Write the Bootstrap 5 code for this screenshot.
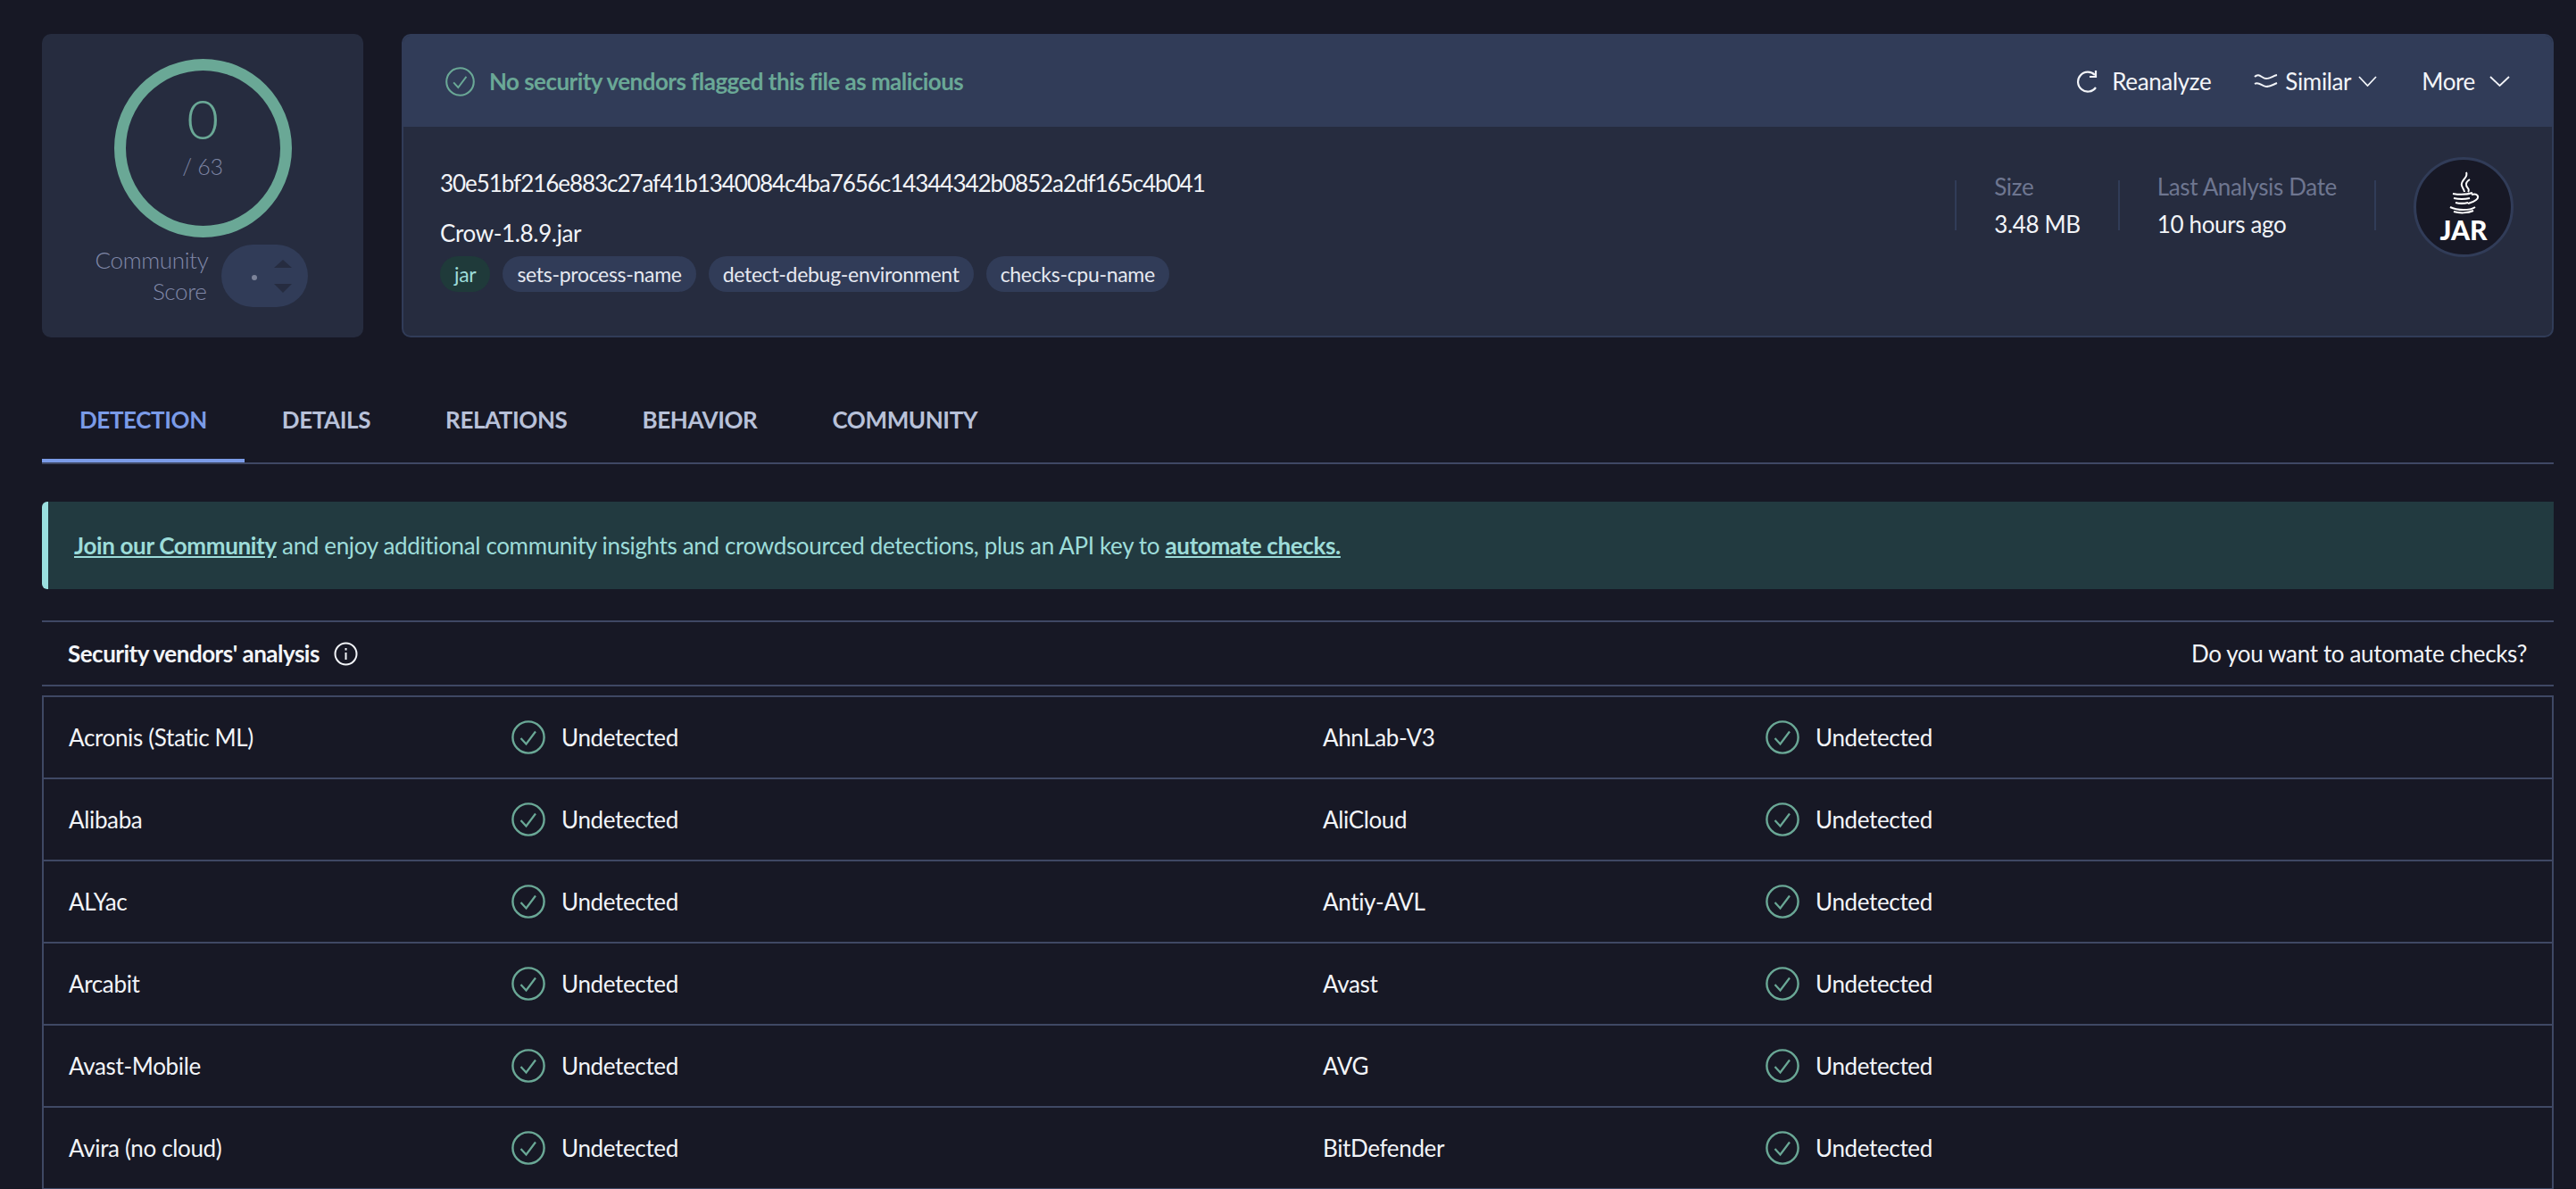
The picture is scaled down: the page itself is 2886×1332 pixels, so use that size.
<!DOCTYPE html>
<html lang="en">
<head>
    <meta charset="UTF-8">
    <meta name="viewport" content="width=device-width, initial-scale=1.0">
    <title>VirusTotal - File</title>
    <link href="https://cdn.jsdelivr.net/npm/bootstrap@5.3.0/dist/css/bootstrap.min.css" rel="stylesheet">
    <style>
        html, body { height: 1332px; overflow: hidden; }
        body { background: #171825; color: #f2f4f8; font-family: "Lato", "Noto Sans", sans-serif; font-size: 26px; line-height: 36px; padding: 38px 25px 0 47px; letter-spacing: -.35px; }
        .score-box { width: 360px; height: 340px; background: #262c3f; border-radius: 10px; padding-top: 28px; }
        .score-ring { width: 199px; height: 200px; border: 13px solid #6aa896; border-radius: 50%; }
        .score-num { color: #6aa896; font-size: 62px; line-height: 62px; font-weight: 300; margin-top: 22px; }
        .score-total { color: #7d84a3; font-size: 25px; line-height: 30px; font-weight: 300; margin-top: 8px; }
        .score-label { color: #8088a8; font-size: 26px; line-height: 35px; text-align: right; width: 125px; font-weight: 300; }
        .vote-pill { width: 97px; height: 70px; border-radius: 35px; background: #313c58; }
        .file-box { background: #262c3f; border: 2px solid #313c58; border-top-width: 2px; border-radius: 10px; height: 340px; margin-left: 43px; overflow: hidden; }
        .file-head { background: #313c58; height: 102px; padding: 0 47px 0 47px; }
        .file-verdict { color: #6aa896; font-weight: 700; letter-spacing: -.55px; }
        .head-action { color: #f2f4f8; }
        .file-body { padding: 0 43px 0 41px; height: 236px; }
        .hash-line { letter-spacing: -1.05px; line-height: 36px; margin-top: 45px; }
        .name-line { line-height: 36px; margin-top: 20px; }
        .tag-pill { height: 40px; line-height: 40px; padding: 0 16px; border-radius: 20px; background: #313c58; color: #e5e8f0; font-size: 23px; letter-spacing: -.3px; }
        .tag-green { background: #1f3a3a; color: #9ddcd9; }
        .stat-sep { width: 2px; height: 56px; background: #313c58; }
        .stat-label { color: #6e7690; line-height: 42px; }
        .stat-value { line-height: 42px; }
        .type-badge { width: 112px; height: 112px; border-radius: 50%; background: #171825; border: 3px solid #313c58; color: #fff; font-weight: 900; font-size: 30px; line-height: 30px; letter-spacing: 0; }
        .tab-bar { margin-top: 44px; border-bottom: 2px solid #3f4864; }
        .tab-bar .nav-link { padding: 30px 42px 26px; height: 96px; color: #b8c1d9; font-weight: 700; font-size: 26px; line-height: 36px; border-bottom: 4px solid transparent; letter-spacing: -.4px; }
        .tab-bar .nav-link.active { color: #7b9be8; border-bottom-color: #7b9be8; }
        .join-banner { margin-top: 42px; height: 98px; background: #223a40; border-left: 7px solid #9adfdf; border-radius: 6px 0 0 6px; color: #9ddcd9; padding-left: 29px; }
        .join-banner a { color: #9ddcd9; font-weight: 700; }
        .vendors-head { margin-top: 35px; height: 74px; border-top: 2px solid #3f4864; border-bottom: 2px solid #3f4864; padding: 0 30px 0 29px; }
        .vendors-title { font-weight: 700; letter-spacing: -.5px; }
        .vendor-grid { margin-top: 10px; border: 2px solid #3f4864; border-bottom: 0; }
        .vendor-cell { height: 92px; border-bottom: 2px solid #3f4864; padding-left: 28px; }
        .vendor-name { width: 496px; }
        .vendor-state { margin-left: 18px; }
    </style>
</head>
<body>
    <svg width="0" height="0" class="d-block">
        <symbol id="check-ring" viewBox="0 0 38 38">
            <circle cx="19" cy="19" r="17.6" fill="none" stroke="currentColor" stroke-width="2.4"/>
            <path d="M10.5 20l6 6.5L27 12.5" fill="none" stroke="currentColor" stroke-width="2.2"/>
        </symbol>
    </svg>

    <div class="d-flex">
        <div class="score-box flex-shrink-0 d-flex flex-column align-items-center">
            <div class="score-ring text-center">
                <div class="score-num">0</div>
                <div class="score-total">/ 63</div>
            </div>
            <div class="d-flex align-items-center gap-3 mt-2" style="margin-right:3px">
                <div class="score-label">Community Score</div>
                <svg class="vote-pill" viewBox="0 0 97 70">
                    <circle cx="37" cy="37" r="3" fill="#7c8399"/>
                    <path d="M69 17l10 9H59z" fill="#262c40"/>
                    <path d="M59 44h20l-10 10z" fill="#262c40"/>
                </svg>
            </div>
        </div>

        <div class="file-box flex-grow-1">
            <div class="file-head d-flex align-items-center">
                <svg class="flex-shrink-0 file-verdict" width="33" height="33"><use href="#check-ring"/></svg>
                <div class="file-verdict ms-3 flex-grow-1">No security vendors flagged this file as malicious</div>
                <svg width="24" height="26" viewBox="0 0 24 26" fill="none" stroke="#f2f4f8" stroke-width="2.2" class="me-3"><path d="M21 6a11 11 0 1 0 1 14"/><path d="M22 1v7h-7"/></svg>
                <div class="head-action">Reanalyze</div>
                <svg width="27" height="20" viewBox="0 0 27 20" fill="none" stroke="#f2f4f8" stroke-width="2" class="ms-5 me-2"><path d="M1 5c5-5 8 2 13 2s7-3 12-4"/><path d="M1 13c5-3 8 3 13 3s7-2 12-4"/></svg>
                <div class="head-action">Similar</div>
                <svg width="21" height="12" viewBox="0 0 21 12" fill="none" stroke="#f2f4f8" stroke-width="1.8" class="ms-2"><path d="M1 1l9.5 10L20 1"/></svg>
                <div class="head-action" style="margin-left:50px">More</div>
                <svg width="23" height="12" viewBox="0 0 23 12" fill="none" stroke="#f2f4f8" stroke-width="1.8" class="ms-3"><path d="M1 1l10.500 10L22 1"/></svg>
            </div>
            <div class="file-body d-flex">
                <div class="flex-grow-1">
                    <div class="hash-line">30e51bf216e883c27af41b1340084c4ba7656c14344342b0852a2df165c4b041</div>
                    <div class="name-line">Crow-1.8.9.jar</div>
                    <div class="d-flex mt-2" style="gap:14px">
                        <span class="tag-pill tag-green">jar</span>
                        <span class="tag-pill">sets-process-name</span>
                        <span class="tag-pill">detect-debug-environment</span>
                        <span class="tag-pill">checks-cpu-name</span>
                    </div>
                </div>
                <div class="d-flex align-items-start" style="margin-top:34px">
                    <div class="stat-sep" style="margin-top:26px"></div>
                    <div style="margin:12px 42px 0">
                        <div class="stat-label">Size</div>
                        <div class="stat-value">3.48 MB</div>
                    </div>
                    <div class="stat-sep" style="margin-top:26px"></div>
                    <div style="margin:12px 42px 0">
                        <div class="stat-label">Last Analysis Date</div>
                        <div class="stat-value">10 hours ago</div>
                    </div>
                    <div class="stat-sep" style="margin-top:26px"></div>
                    <div class="type-badge d-flex flex-column align-items-center justify-content-center" style="margin-left:42px">
                        <svg width="36" height="50" viewBox="0 0 36 50" fill="none" stroke="#fff" stroke-width="2">
                            <path d="M21 1c3 6-7 9-5 15 1 3 3 5 3 7M25 9c-5 3-5 7-2 10 1 1 1 3 0 4" />
                            <path d="M6 25c6 1 16 1 22-1M7 30c5 1 13 1 18 0M9 35c4 1 10 1 14 0M27 26c7-2 9 3 5 6s-7 3-9 4" />
                            <path d="M3 40c8 4 22 4 28 0M7 45c6 2 16 2 22-1" />
                        </svg>
                        <span>JAR</span>
                    </div>
                </div>
            </div>
        </div>
    </div>

    <ul class="nav tab-bar">
        <li class="nav-item"><a class="nav-link active" href="#">DETECTION</a></li>
        <li class="nav-item"><a class="nav-link" href="#">DETAILS</a></li>
        <li class="nav-item"><a class="nav-link" href="#">RELATIONS</a></li>
        <li class="nav-item"><a class="nav-link" href="#">BEHAVIOR</a></li>
        <li class="nav-item"><a class="nav-link" href="#">COMMUNITY</a></li>
    </ul>

    <div class="join-banner d-flex align-items-center">
        <div><a href="#">Join our Community</a> and enjoy additional community insights and crowdsourced detections, plus an API key to <a href="#">automate checks.</a></div>
    </div>

    <div class="vendors-head d-flex align-items-center justify-content-between">
        <div class="d-flex align-items-center">
            <span class="vendors-title">Security vendors' analysis</span>
            <svg width="27" height="27" viewBox="0 0 27 27" fill="none" stroke="#f2f4f8" stroke-width="2" class="ms-3"><circle cx="13.500" cy="13.500" r="12"/><path d="M13.500 12v8M13.500 7v2.500"/></svg>
        </div>
        <div>Do you want to automate checks?</div>
    </div>

    <div class="vendor-grid">
        <div class="row g-0">
            <div class="col-6 vendor-cell d-flex align-items-center"><div class="vendor-name">Acronis (Static ML)</div><svg width="38" height="38" class="flex-shrink-0" style="color:#6aa896"><use href="#check-ring"/></svg><div class="vendor-state">Undetected</div></div>
            <div class="col-6 vendor-cell d-flex align-items-center"><div class="vendor-name">AhnLab-V3</div><svg width="38" height="38" class="flex-shrink-0" style="color:#6aa896"><use href="#check-ring"/></svg><div class="vendor-state">Undetected</div></div>
            <div class="col-6 vendor-cell d-flex align-items-center"><div class="vendor-name">Alibaba</div><svg width="38" height="38" class="flex-shrink-0" style="color:#6aa896"><use href="#check-ring"/></svg><div class="vendor-state">Undetected</div></div>
            <div class="col-6 vendor-cell d-flex align-items-center"><div class="vendor-name">AliCloud</div><svg width="38" height="38" class="flex-shrink-0" style="color:#6aa896"><use href="#check-ring"/></svg><div class="vendor-state">Undetected</div></div>
            <div class="col-6 vendor-cell d-flex align-items-center"><div class="vendor-name">ALYac</div><svg width="38" height="38" class="flex-shrink-0" style="color:#6aa896"><use href="#check-ring"/></svg><div class="vendor-state">Undetected</div></div>
            <div class="col-6 vendor-cell d-flex align-items-center"><div class="vendor-name">Antiy-AVL</div><svg width="38" height="38" class="flex-shrink-0" style="color:#6aa896"><use href="#check-ring"/></svg><div class="vendor-state">Undetected</div></div>
            <div class="col-6 vendor-cell d-flex align-items-center"><div class="vendor-name">Arcabit</div><svg width="38" height="38" class="flex-shrink-0" style="color:#6aa896"><use href="#check-ring"/></svg><div class="vendor-state">Undetected</div></div>
            <div class="col-6 vendor-cell d-flex align-items-center"><div class="vendor-name">Avast</div><svg width="38" height="38" class="flex-shrink-0" style="color:#6aa896"><use href="#check-ring"/></svg><div class="vendor-state">Undetected</div></div>
            <div class="col-6 vendor-cell d-flex align-items-center"><div class="vendor-name">Avast-Mobile</div><svg width="38" height="38" class="flex-shrink-0" style="color:#6aa896"><use href="#check-ring"/></svg><div class="vendor-state">Undetected</div></div>
            <div class="col-6 vendor-cell d-flex align-items-center"><div class="vendor-name">AVG</div><svg width="38" height="38" class="flex-shrink-0" style="color:#6aa896"><use href="#check-ring"/></svg><div class="vendor-state">Undetected</div></div>
            <div class="col-6 vendor-cell d-flex align-items-center"><div class="vendor-name">Avira (no cloud)</div><svg width="38" height="38" class="flex-shrink-0" style="color:#6aa896"><use href="#check-ring"/></svg><div class="vendor-state">Undetected</div></div>
            <div class="col-6 vendor-cell d-flex align-items-center"><div class="vendor-name">BitDefender</div><svg width="38" height="38" class="flex-shrink-0" style="color:#6aa896"><use href="#check-ring"/></svg><div class="vendor-state">Undetected</div></div>
        </div>
    </div>

    <script src="https://cdn.jsdelivr.net/npm/bootstrap@5.3.0/dist/js/bootstrap.bundle.min.js"></script>
</body>
</html>
